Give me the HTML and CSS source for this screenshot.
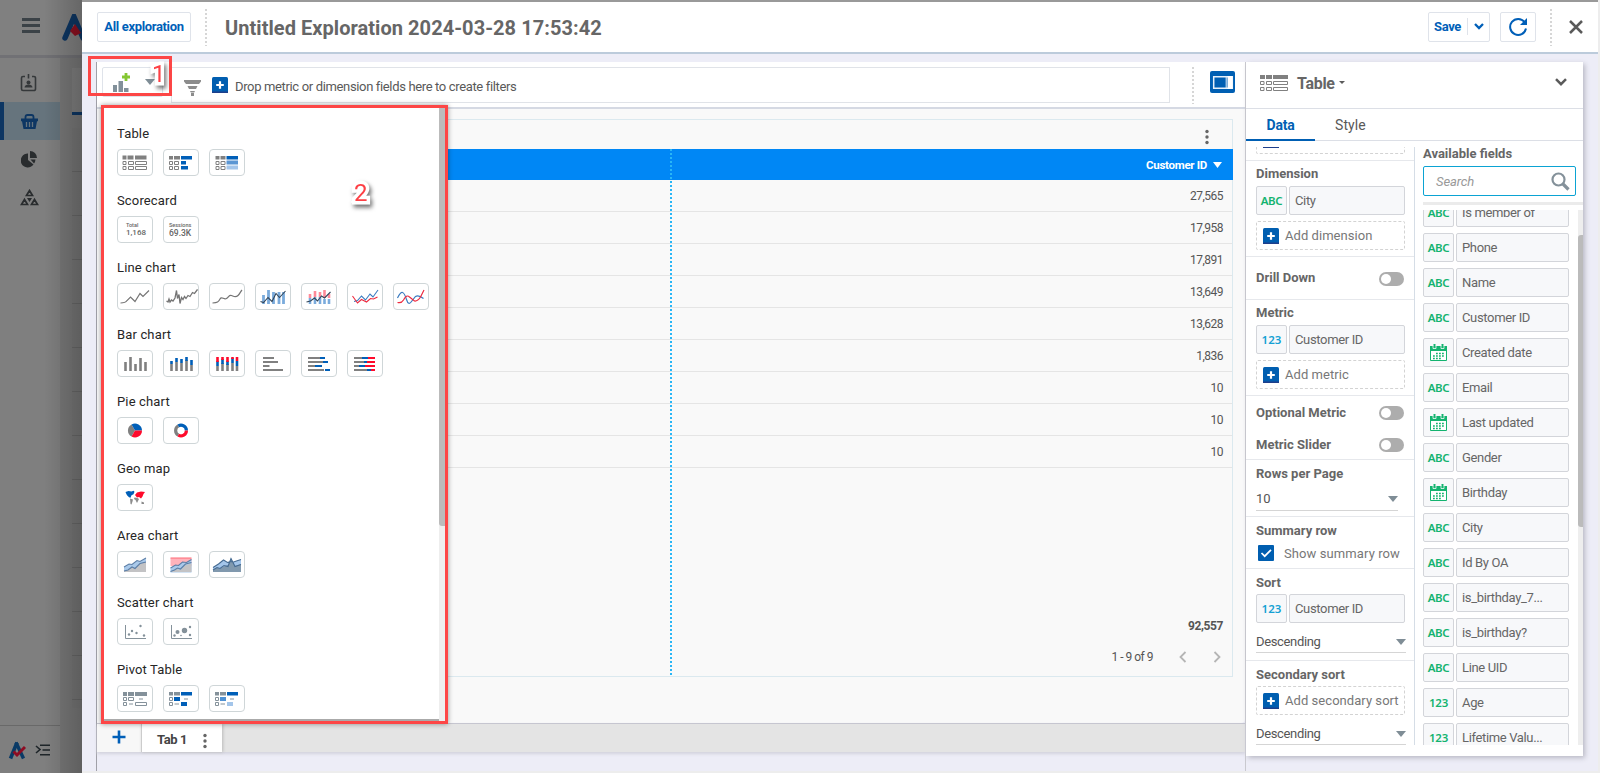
FILE: index.html
```html
<!DOCTYPE html>
<html lang="en">
<head>
<meta charset="utf-8">
<title>Untitled Exploration</title>
<link rel="stylesheet" href="styles.css">
</head>
<body>
<svg class="defs" width="0" height="0">
  <symbol id="plus-box" viewBox="0 0 16 16"><rect width="16" height="16" rx="1.5" fill="#005eb0"/><rect y="14.5" width="16" height="1.5" fill="#1e3f8b"/><path d="M8 4.2v7.6M4.2 8h7.6" stroke="#fff" stroke-width="2.2"/></symbol>
  <symbol id="caret" viewBox="0 0 10 6"><path d="M0 0h10L5 6z" fill="#7f8d96"/></symbol>
  <symbol id="dots" viewBox="0 0 4 16"><circle cx="2" cy="2.5" r="1.7"/><circle cx="2" cy="8" r="1.7"/><circle cx="2" cy="13.5" r="1.7"/></symbol>
  <symbol id="cal" viewBox="0 0 17 17"><path d="M.5 3.500h16v13h-16z" fill="#fff" stroke="#13b36f"/><path d="M0 2h17v5H0z" fill="#13b36f"/><path d="M4.500 0v4M12.500 0v4" stroke="#13b36f" stroke-width="2"/><path d="M3 1.500v3h3v-3M11 1.500v3h3v-3" stroke="#f7f8fa" fill="none" stroke-width=".8"/><path d="M6 9.500h9M3 12h12M3 14.500h8" stroke="#13b36f" stroke-width="1.600" stroke-dasharray="1.800 1.200"/></symbol>
  <symbol id="grid" viewBox="0 0 28 16"><path d="M0 0h5v4H0zM6 0h6v4H6zM13 0h15v4H13z" fill="#808080"/><path d="M.5 6.500h3.500v3H.5zM6.500 6.500h5v3h-5zM13.500 6.500h14v3h-14zM.5 12.500h3.500v3H.5zM6.500 12.500h5v3h-5zM13.500 12.500h14v3h-14z" fill="#fff" stroke="#808080"/></symbol>
  <symbol id="logo" viewBox="0 0 18 20"><path d="M2.500 18.500L9 2.500" stroke="#0a3a66" stroke-width="3.600"/><path d="M8 2.500L15.500 18.500" stroke="#0a3a66" stroke-width="3.400"/><path d="M5.500 11.500l3.500 3.500L17 7" stroke="#8d0c22" stroke-width="3" fill="none"/></symbol>
</svg>

<div class="page">
  <header class="page-head">
    <svg class="burger" width="18" height="16" viewBox="0 0 18 16"><path d="M0 1.500h18M0 7.500h18M0 13.500h18" stroke="#3b4247" stroke-width="3"/></svg>
    <svg class="brand" width="30" height="27" viewBox="0 0 30 27"><path d="M3 24L12 3l9 21" fill="none" stroke="#0d3663" stroke-width="5.500" stroke-linecap="round"/><path d="M8 17l5-7 6 9-6 3z" fill="#8d1020"/></svg>
  </header>
  <div class="page-body">
    <nav class="rail">
      <div class="rail-item"><svg width="18" height="18" viewBox="0 0 18 18" fill="none" stroke="#35383a" stroke-width="1.600"><path d="M5 2.500H3a1.500 1.500 0 0 0-1.500 1.500v11A1.500 1.500 0 0 0 3 16.500h11a1.500 1.500 0 0 0 1.500-1.500V4A1.500 1.500 0 0 0 14 2.500h-2M8.500 0v4.500"/><circle cx="8.500" cy="8.500" r="2" fill="#35383a" stroke="none"/><path d="M4.500 13.500c0-4 8-4 8 0z" fill="#35383a" stroke="none"/></svg></div>
      <div class="rail-item on"><svg width="17" height="15" viewBox="0 0 17 15"><path d="M4.500 6V3q0-2 2-2h4q2 0 2 2v3" fill="none" stroke="#0d3663" stroke-width="1.800"/><path d="M0 4.500h17v2.800H16L14.500 15h-12L1 7.300H0z" fill="#0d3663"/><path d="M5.500 8v5M8.500 8v5M11.500 8v5" stroke="#66747d" stroke-width="1.300"/></svg></div>
      <div class="rail-item"><svg width="17" height="17" viewBox="0 0 17 17" fill="#292c2e"><path d="M7 2.500V9l5.500 4.500A7 7 0 1 1 7 2.500z"/><path d="M9 0a7 7 0 0 1 7 7H9z"/><path d="M9.500 8.500h5q-.2 2.500-1.500 4z"/></svg></div>
      <div class="rail-item"><svg width="19" height="17" viewBox="0 0 19 17" fill="none" stroke="#292c2e" stroke-width="1.700"><path d="M9.500 1.500l3 5H6.500zM4.500 10.500l3 5h-6zM14.500 10.500l3 5h-6z"/><path d="M7 9h5l-2.500 4z" fill="#292c2e" stroke="none"/></svg></div>
      <div class="rail-foot">
        <svg width="18" height="20"><use href="#logo"/></svg>
        <svg width="16" height="12" viewBox="0 0 16 12" fill="none" stroke="#1e2529" stroke-width="1.600"><path d="M1 2l4 3.500L1 9"/><path d="M5 1.200h10M7.500 6H15M5 10.800h10"/></svg>
      </div>
    </nav>
    <div class="under">
      <div class="under-card"></div>
      <div class="under-lines"></div>
    </div>
  </div>
</div>
<div class="shade"></div>

<main class="modal">
  <header class="head">
    <button class="btn all">All exploration</button>
    <i class="dash-sep"></i>
    <h1>Untitled Exploration 2024-03-28 17:53:42</h1>
    <div class="head-right">
      <button class="btn save"><span>Save</span><svg width="10" height="7" viewBox="0 0 10 7"><path d="M1 1l4 4 4-4" fill="none" stroke="#005fb8" stroke-width="2.300"/></svg></button>
      <button class="btn refresh"><svg width="19" height="19" viewBox="0 0 19 19"><path d="M15.500 5A8 8 0 1 0 17 11.500" fill="none" stroke="#005fb8" stroke-width="2"/><path d="M18 1v7h-7z" fill="#005fb8"/></svg></button>
      <i class="dash-sep"></i>
      <svg class="close" width="14" height="14" viewBox="0 0 14 14"><path d="M1 1l12 12M13 1L1 13" stroke="#5a5a5a" stroke-width="2.500"/></svg>
    </div>
  </header>

  <div class="work">
    <section class="board">
      <div class="toolbar">
        <div class="add-chart">
          <svg width="18" height="19" viewBox="0 0 18 19"><path d="M0 12h4v7H0zM5.500 8H10v11H5.500zM11 15h4.500v4H11z" fill="#82909a"/><path d="M13 0v8M9 4h8" stroke="#85c733" stroke-width="2.800"/></svg>
          <svg width="10" height="6"><use href="#caret"/></svg>
        </div>
        <div class="filters">
          <svg width="17" height="16" viewBox="0 0 17 16" fill="#8c8c8c"><path d="M0 0h17v1.500L15 4H2L0 1.500zM3.500 6h10L12 9H5zM6 11h5l-.8 1.500H6.800zM7 13h3v3H7z"/></svg>
          <svg class="pb" width="16" height="16"><use href="#plus-box"/></svg>
          <span>Drop metric or dimension fields here to create filters</span>
        </div>
        <i class="dash-sep"></i>
        <svg class="panel-btn" width="25" height="22" viewBox="0 0 25 22"><rect width="25" height="22" rx="2" fill="#005fb3"/><path d="M3.700 5.700h18.600v11.600H3.700z" fill="#005fb3" stroke="#e6f0fa" stroke-width="1.500"/><path d="M17.500 5h5v13h-5z" fill="#fff"/><path d="M16.200 5v13" stroke="#e6f0fa"/></svg>
      </div>
      <div class="canvas">
        <div class="grid-card">
          <div class="card-top"><svg width="4" height="16" fill="#666"><use href="#dots"/></svg></div>
          <div class="th"><span>Customer ID</span><svg width="9" height="6" viewBox="0 0 9 6"><path d="M0 0h9L4.500 6z" fill="#fff"/></svg></div>
          <div class="td">27,565</div>
          <div class="td">17,958</div>
          <div class="td">17,891</div>
          <div class="td">13,649</div>
          <div class="td">13,628</div>
          <div class="td">1,836</div>
          <div class="td">10</div>
          <div class="td">10</div>
          <div class="td">10</div>
          <div class="total">92,557</div>
          <div class="pager"><span>1 - 9 of 9</span>
            <svg width="8" height="12" viewBox="0 0 8 12"><path d="M6.500 1L1.500 6l5 5" fill="none" stroke="#b5b5b5" stroke-width="1.800"/></svg>
            <svg width="8" height="12" viewBox="0 0 8 12"><path d="M1.500 1l5 5-5 5" fill="none" stroke="#b5b5b5" stroke-width="1.800"/></svg>
          </div>
          <i class="col-line"></i>
        </div>
      </div>
      <div class="tabs-bar">
        <div class="tab-add"><svg width="14" height="14" viewBox="0 0 14 14"><path d="M7 .5v13M.5 7h13" stroke="#005fb8" stroke-width="2.600"/></svg></div>
        <div class="tab-one"><span>Tab 1</span><svg width="4" height="16" fill="#666"><use href="#dots"/></svg></div>
      </div>
    </section>

    <aside class="side">
      <div class="side-head">
        <svg width="28" height="16"><use href="#grid"/></svg>
        <b>Table</b>
        <svg width="6" height="3" viewBox="0 0 6 3"><path d="M0 0h6L3 3z" fill="#5a5a5a"/></svg>
        <svg class="fold" width="12" height="8" viewBox="0 0 12 8"><path d="M1 1.200l5 5 5-5" fill="none" stroke="#5a5a5a" stroke-width="2.500"/></svg>
      </div>
      <div class="side-tabs"><b>Data</b><span>Style</span></div>
      <div class="side-body">
        <div class="setup">
          <div class="sec sec-cut"><div class="drop"><svg width="16" height="16"><use href="#plus-box"/></svg></div></div>
          <div class="sec sec-field">
            <h4>Dimension</h4>
            <div class="field"><i class="type green">ABC</i><span>City</span></div>
            <div class="drop"><svg width="16" height="16"><use href="#plus-box"/></svg>Add dimension</div>
          </div>
          <div class="sec sec-drill"><h4>Drill Down</h4><i class="switch"></i></div>
          <div class="sec sec-field">
            <h4>Metric</h4>
            <div class="field"><i class="type blue">123</i><span>Customer ID</span></div>
            <div class="drop"><svg width="16" height="16"><use href="#plus-box"/></svg>Add metric</div>
          </div>
          <div class="sec sec-toggles">
            <div><h4>Optional Metric</h4><i class="switch"></i></div>
            <div><h4>Metric Slider</h4><i class="switch"></i></div>
          </div>
          <div class="sec sec-rows">
            <h4>Rows per Page</h4>
            <div class="select narrow">10<svg width="10" height="6"><use href="#caret"/></svg></div>
          </div>
          <div class="sec sec-sum">
            <h4>Summary row</h4>
            <div class="check"><svg width="16" height="16" viewBox="0 0 16 16"><rect width="16" height="16" rx="1" fill="#005eb0"/><path d="M3.500 8l3.200 3.200L13 4.800" fill="none" stroke="#fff" stroke-width="1.700"/></svg>Show summary row</div>
          </div>
          <div class="sec sec-sort">
            <h4>Sort</h4>
            <div class="field"><i class="type blue">123</i><span>Customer ID</span></div>
            <div class="select">Descending<svg width="10" height="6"><use href="#caret"/></svg></div>
          </div>
          <div class="sec sec-second">
            <h4>Secondary sort</h4>
            <div class="drop"><svg width="16" height="16"><use href="#plus-box"/></svg>Add secondary sort</div>
            <div class="select">Descending<svg width="10" height="6"><use href="#caret"/></svg></div>
          </div>
        </div>
        <div class="avail">
          <h4>Available fields</h4>
          <div class="search"><em>Search</em><svg width="19" height="19" viewBox="0 0 19 19"><circle cx="7.500" cy="7.500" r="6" fill="none" stroke="#84919a" stroke-width="2.200"/><path d="M11.500 11.500l6 6" stroke="#84919a" stroke-width="3.200"/></svg></div>
          <div class="bar"></div>
          <div class="list-wrap">
            <div class="list">
              <div class="field"><i class="type green">ABC</i><span>Is member of</span></div>
              <div class="field"><i class="type green">ABC</i><span>Phone</span></div>
              <div class="field"><i class="type green">ABC</i><span>Name</span></div>
              <div class="field"><i class="type green">ABC</i><span>Customer ID</span></div>
              <div class="field"><i class="type"><svg width="17" height="17"><use href="#cal"/></svg></i><span>Created date</span></div>
              <div class="field"><i class="type green">ABC</i><span>Email</span></div>
              <div class="field"><i class="type"><svg width="17" height="17"><use href="#cal"/></svg></i><span>Last updated</span></div>
              <div class="field"><i class="type green">ABC</i><span>Gender</span></div>
              <div class="field"><i class="type"><svg width="17" height="17"><use href="#cal"/></svg></i><span>Birthday</span></div>
              <div class="field"><i class="type green">ABC</i><span>City</span></div>
              <div class="field"><i class="type green">ABC</i><span>Id By OA</span></div>
              <div class="field"><i class="type green">ABC</i><span>is_birthday_7...</span></div>
              <div class="field"><i class="type green">ABC</i><span>is_birthday?</span></div>
              <div class="field"><i class="type green">ABC</i><span>Line UID</span></div>
              <div class="field"><i class="type green">123</i><span>Age</span></div>
              <div class="field"><i class="type green">123</i><span>Lifetime Valu...</span></div>
            </div>
            <div class="track"><div class="thumb"></div></div>
          </div>
        </div>
      </div>
    </aside>
  </div>
</main>

<div class="mark mark-1"></div>
<div class="num num-1">1</div>

<div class="menu">
  <div class="menu-list">
    <section><h3>Table</h3><div class="opts">
      <i><svg viewBox="0 0 36 27"><path d="M5.500 6.500h4v4h-4zM10.500 6.500h6v4h-6zM18 6.500h11.500v4H18z" fill="#808080"/><path d="M6 12.500h3v3H6zM11.500 12.500h5v3h-5zM18.500 12.500h11v3h-11zM6 17.500h3v3H6zM11.500 17.500h5v3h-5zM18.500 17.500h11v3h-11z" fill="none" stroke="#808080"/></svg></i>
      <i><svg viewBox="0 0 36 27"><path d="M6 7h4v3.500H6zM11 7h6v3.500h-6z" fill="#808080"/><path d="M6.500 12.500h3v3h-3zM11.500 12.500h4v3h-4zM6.500 17.500h3v3h-3zM11.500 17.500h4v3h-4z" fill="none" stroke="#808080"/><path d="M18 7h11v3.500H18zM18 12h5v3.500h-5zM18 17h7v3.500h-7z" fill="#005fb8"/></svg></i>
      <i><svg viewBox="0 0 36 27"><path d="M6.500 7h4v3.500h-4zM11.500 7h5v3.500h-5z" fill="#808080"/><path d="M7 12.500h3v3H7zM12 12.500h4v3h-4zM7 17.500h3v3H7zM12 17.500h4v3h-4z" fill="none" stroke="#808080"/><path d="M17.500 7H29v3.500H17.500z" fill="#005fb8"/><path d="M17.500 11.500H29v4H17.500z" fill="#5b96d3"/><path d="M17.500 16.500H29v4H17.500z" fill="#a3c5ea"/></svg></i>
    </div></section>
    <section><h3>Scorecard</h3><div class="opts">
      <i class="score"><small>Total</small><span>1,168</span></i>
      <i class="score wide"><small>Sessions</small><span>69.3K</span></i>
    </div></section>
    <section><h3>Line chart</h3><div class="opts">
      <i><svg viewBox="0 0 36 27" fill="none" stroke="#757575" stroke-width="1.200"><path d="M3.500 20q5 0 6.500-2.500l3.500-3.500 4.500 4.500 5-8 3 3 6-6"/></svg></i>
      <i><svg viewBox="0 0 36 27" fill="none" stroke="#757575" stroke-width="1.300"><path d="M3.500 18l1.500 1 1-3 1 3 1.500-2 1.500 1 2-3 1.500-7.500 1 8 1.500-4 1 9 1.500-6 1.500 2 1.500-3 1.500 2 2-3 2 1 2.500-4 2 1 3-4"/></svg></i>
      <i><svg viewBox="0 0 36 27" fill="none" stroke="#757575" stroke-width="1.200"><path d="M3.500 20c5-.5 6-1 7.500-4s4 1 6.500-.5 2.500-4 5-3 4 2.500 6.500 0c2-2 2.500-4 4-5.500"/></svg></i>
      <i><svg viewBox="0 0 36 27" fill="none"><path d="M8.500 21v-9M13.500 21V7M18.500 21V9M24 21V9M28.500 21V9" stroke="#7aabdc" stroke-width="2.800"/><path d="M5.500 18.500l3 1 4.500-5 4 4 4-8 3.500 4 6-6.500" stroke="#33475b" stroke-width="1.100"/></svg></i>
      <i><svg viewBox="0 0 36 27" fill="none"><path d="M9 21v-6M14 21v-7M19 21v-7M23.500 21v-5M28 21v-5" stroke="#7aabdc" stroke-width="2.600"/><path d="M9 15v-4M14 14V8M19 14V9M23.500 15V7M28 15v-4" stroke="#ff8a98" stroke-width="2.600"/><path d="M5.500 19l4-1 4-3 3 3 4-5 3 2 6-6" stroke="#33475b" stroke-width="1.100"/></svg></i>
      <i><svg viewBox="0 0 36 27" fill="none" stroke-width="1.100"><path d="M7 18.500l3.500-1 4-4.500 4 4 4.500-6 3 3L31 7" stroke="#3b7cc0"/><path d="M5.500 13l5 7 4-3.500 5 2.500 4-3.500 3 .5 4-2" stroke="#ee2a3f"/></svg></i>
      <i><svg viewBox="0 0 36 27" fill="none" stroke-width="1.200"><path d="M4.500 15q3-6 5-5.500t4 7 5 2l4-5q3-2 8 2" stroke="#3b7cc0"/><path d="M4.500 19.500q4 1 6-2.500 3-6 6-3l5 4q3 .5 6-4l3.500-7" stroke="#ee2a3f"/></svg></i>
    </div></section>
    <section><h3>Bar chart</h3><div class="opts">
      <i><svg viewBox="0 0 36 27" fill="none" stroke="#808080" stroke-width="2.600"><path d="M8.500 21v-9M13.500 21V7M18.500 21v-7M23.500 21V8M28.500 21v-9"/></svg></i>
      <i><svg viewBox="0 0 36 27" fill="none" stroke="#808080" stroke-width="2.600"><path d="M8.500 21v-7M13.500 21v-9M18.500 21v-8M23.500 21V10M28.500 21v-6"/><path d="M8.500 14v-3M13.500 12V8M18.500 13V9M23.500 11V7M28.500 15v-5" stroke="#005fb8"/></svg></i>
      <i><svg viewBox="0 0 36 27" fill="none" stroke="#808080" stroke-width="2.600"><path d="M8.500 21v-5M13.500 21v-8M18.500 21v-7M23.500 21v-8M28 21v-5"/><path d="M8.500 16v-5M13.500 14V9M18.500 15v-4M23.500 13V8M28 16v-5" stroke="#005fb8"/><path d="M8.500 12V7M13.500 10V7M18.500 12V7M23.500 9V7M28 11V7" stroke="#ff0a2b"/></svg></i>
      <i><svg viewBox="0 0 36 27" fill="none" stroke="#808080" stroke-width="2"><path d="M8 8h11M8 12h15M8 16h6.500M8 20h20"/></svg></i>
      <i><svg viewBox="0 0 36 27" fill="none" stroke="#808080" stroke-width="2"><path d="M7 8h12M7 12h15M7 16h7M7 20h16"/><path d="M19 8h5M22 12h5M14 16h7M24 20h5" stroke="#005fb8"/></svg></i>
      <i><svg viewBox="0 0 36 27" fill="none" stroke="#808080" stroke-width="2"><path d="M7 8h8M7 12h10M7 16h5M7 20h15"/><path d="M15 8h6M17 12h4M12 16h6M20 20h5" stroke="#005fb8"/><path d="M21 8h7M20 12h8M18 16h10M24 20h4" stroke="#ff0a2b"/></svg></i>
    </div></section>
    <section><h3>Pie chart</h3><div class="opts">
      <i><svg viewBox="0 0 36 27"><path d="M18 13.500L14.500 7.400A7 7 0 0 0 14.500 19.600z" fill="#808080"/><path d="M18 13.500L14.500 7.400A7 7 0 0 1 25 13.500z" fill="#005fb8"/><path d="M18 13.500H25A7 7 0 0 1 14.500 19.600z" fill="#ff0a2b"/></svg></i>
      <i><svg viewBox="0 0 36 27" fill="none" stroke-width="3.200"><path d="M15.300 8.900A5.400 5.400 0 0 0 15.300 18.200" stroke="#808080"/><path d="M15.300 8.900A5.400 5.400 0 0 1 23.400 13.500" stroke="#005fb8"/><path d="M23.400 13.500A5.400 5.400 0 0 1 15.300 18.200" stroke="#ff0a2b"/></svg></i>
    </div></section>
    <section><h3>Geo map</h3><div class="opts">
      <i><svg viewBox="0 0 36 27"><path d="M8.500 8l3-1 3 .5 2-.7 1 1-1 2.500-2 1-1 2.500-1.500-.5-2-2-1-2z" fill="#005fb8"/><path d="M13 14.500l3 1-.5 2-1 3-1-.5zM17.500 13.500l3 .5 1.500 1-1 2-1 2-1.500-3-1.500-1zM24.500 17.500l2.500 1v1.500h-2.500z" fill="#8c8c8c"/><path d="M18 11l2-2.500 4-1 4 .5-1.500 2-1 2.500-1.500 2-2-1.500-2 .5z" fill="#ff0a2b"/></svg></i>
    </div></section>
    <section><h3>Area chart</h3><div class="opts">
      <i><svg viewBox="0 0 36 27"><path d="M7 16l5-3 3 .5 5-4 3 1L29 7v14H7z" fill="#a9c9ea"/><path d="M7 20l4-1 4-3 3 1.500 5-5 6-1.500v10H7z" fill="#c3c3c5"/><path d="M7 16l5-3 3 .5 5-4 3 1L29 7M7 20l4-1 4-3 3 1.500 5-5 6-1.500" fill="none" stroke="#5c7ea6" stroke-width="1.100"/></svg></i>
      <i><svg viewBox="0 0 36 27"><path d="M7.500 7h21v8h-21z" fill="#ffb3bb"/><path d="M7.500 7h21" stroke="#ff6975"/><path d="M7.500 17l5-3 3 .5 4-3.500 4 .5 5-3v13h-21z" fill="#a9c9ea"/><path d="M7.500 21l4-2 3-1 3 1 5-5 6-1.500v8.500z" fill="#c3c3c5"/><path d="M7.500 17l5-3 3 .5 4-3.500 4 .5 5-3M7.500 20.500l4-1.500 3-2 3 1 5-5 6-1.500" fill="none" stroke="#5c7ea6" stroke-width="1.100"/></svg></i>
      <i><svg viewBox="0 0 36 27"><path d="M4 16.500l5.500-3.500 5-4 4 2.500 3-1 3 .5L32 8.500V21H4z" fill="#a3c5ea"/><path d="M4 21v-2l4-2.500 3 1 5-2.500 3-1 3-7 4 8 6-2v8z" fill="#8199ae"/><path d="M4 16.500l5.500-3.500 5-4 4 2.500 3-1 3 .5L32 8.500M4 19l4-2.500 3 1 4-3 4 1 3-8 4 8 6-2" fill="none" stroke="#466b92" stroke-width="1.100"/></svg></i>
    </div></section>
    <section><h3>Scatter chart</h3><div class="opts">
      <i><svg viewBox="0 0 36 27"><path d="M8.500 7v13.500H29" fill="none" stroke="#84919a"/><g fill="#84919a"><circle cx="12" cy="16.500" r="1.200"/><circle cx="15" cy="13" r="1.200"/><circle cx="19.500" cy="15" r="1.200"/><circle cx="23.500" cy="8" r="1.200"/><circle cx="27" cy="17.500" r="1.200"/></g></svg></i>
      <i><svg viewBox="0 0 36 27"><path d="M8.500 7v13.500H29" fill="none" stroke="#84919a"/><g fill="#84919a"><circle cx="11.500" cy="17.500" r="1.200"/><circle cx="14.500" cy="14" r="2"/><circle cx="21.500" cy="12.500" r="2.700"/><circle cx="18" cy="17.500" r=".8"/><circle cx="27" cy="9" r="1.200"/><circle cx="27" cy="17" r="1.200"/></g></svg></i>
    </div></section>
    <section><h3>Pivot Table</h3><div class="opts">
      <i><svg viewBox="0 0 36 27"><path d="M6 7h4v4H6zM11 7h6v4h-6zM18 7h12v4H18z" fill="#84919a"/><path d="M6.500 12.500h3v3h-3zM11.500 12.500h5v3h-5zM6.500 17.500h3v3h-3zM18.500 17.500h11v3h-11zM22 14h4M12 19h4" fill="none" stroke="#84919a"/></svg></i>
      <i><svg viewBox="0 0 36 27"><path d="M6 7h4v3.500H6zM11 7h6v3.500h-6z" fill="#84919a"/><path d="M6.500 12.500h3v3h-3zM6.500 17.500h3v3h-3zM21 14h4M11.500 19h4.500" fill="none" stroke="#84919a"/><path d="M18 7h11v3.500H18zM11 12h6v4h-6zM18 17h6v4h-6z" fill="#005fb8"/></svg></i>
      <i><svg viewBox="0 0 36 27"><path d="M6 7h4v3.500H6zM11 7h6v3.500h-6z" fill="#84919a"/><path d="M6.500 12.500h3v3h-3zM6.500 17.500h3v3h-3zM21 14h4M11.500 19h4.500" fill="none" stroke="#84919a"/><path d="M18 7h11v3.500H18z" fill="#005fb8"/><path d="M11 12h6v4h-6z" fill="#4e91d4"/><path d="M18 17h6v4h-6z" fill="#a3c5ea"/></svg></i>
    </div></section>
  </div>
  <div class="menu-track"><div class="menu-thumb"></div></div>
</div>
<div class="num num-2">2</div>
</body>
</html>
```
FILE: styles.css
```css
* { box-sizing: border-box; }
body { margin: 0; width: 1600px; height: 773px; overflow: hidden; position: relative; background: #ededed; font-family: Roboto, "Liberation Sans", sans-serif; font-size: 13px; color: #595959; }
h1, h3, h4 { margin: 0; }
svg { display: block; flex: none; }
i { font-style: normal; }
.defs { position: absolute; }

/* dimmed page under the dialog */
.page { width: 82px; height: 773px; overflow: hidden; background: #777; display: flex; flex-direction: column; }
.page-head { height: 58px; flex: none; background: #808080; border-bottom: 3px solid #717175; display: flex; padding: 14px 0 0 22px; }
.burger { margin-top: 4px; }
.brand { margin-left: 22px; }
.page-body { flex: 1; display: flex; }
.rail { width: 60px; flex: none; background: #7f7f7f; display: flex; flex-direction: column; padding-top: 6px; }
.rail-item { height: 38px; display: flex; align-items: center; justify-content: center; padding-right: 2px; }
.rail-item.on { background: #66747d; border-left: 4px solid #0d3663; padding-right: 6px; }
.rail-foot { margin-top: auto; height: 48px; border-top: 1px solid #696969; display: flex; align-items: center; gap: 9px; padding-left: 8px; }
.under { width: 100px; flex: none; padding: 10px 0 0 12px; }
.under-card { height: 47px; background: #7e7e7e; border-bottom: 3px solid #0d3663; }
.under-lines { height: 580px; margin-top: 13px; background: repeating-linear-gradient(#757575 0 43px, #676767 43px 44px); }
.shade { position: absolute; left: 44px; top: 0; width: 38px; height: 773px; background: linear-gradient(90deg, rgba(0,0,0,0), rgba(0,0,0,.2)); }

/* dialog */
.modal { position: absolute; left: 82px; top: 0; width: 1516px; height: 771px; border-top: 2px solid #999; background: #ededf7; display: flex; flex-direction: column; }
.head { height: 52px; flex: none; background: #fff; border-bottom: 2px solid #bccbdb; display: flex; align-items: flex-start; padding: 10px 15px 0; }
.btn { height: 30px; background: #fff; border: 1px solid #dfe3ea; border-radius: 2px; color: #005fb8; font: 700 13px Roboto, sans-serif; letter-spacing: -.35px; padding: 0 0 1px; display: flex; align-items: center; justify-content: center; }
.all { width: 94px; margin-right: 14px; }
.dash-sep { width: 2px; height: 37px; flex: none; background: repeating-linear-gradient(#d6d6d6 0 2px, #fff 2px 4px); }
.head .dash-sep { margin-top: -3px; }
h1 { font-size: 20px; font-weight: 700; color: #666; line-height: 30px; margin-left: 18px; padding-top: 1px; white-space: nowrap; letter-spacing: .05px; }
.head-right { margin-left: auto; display: flex; }
.save { width: 62px; margin-right: 10px; }
.save span { padding-right: 6px; border-right: 1px solid #dfe3ea; line-height: 17px; margin-right: 6px; }
.refresh { width: 36px; margin-right: 14px; }
.close { margin: 8px 0 0 17px; }

.work { flex: 1; display: flex; padding: 8px 0 0 14px; }
.board { width: 1150px; display: flex; flex-direction: column; border-left: 1px solid #a0a0a8; border-right: 1px solid #c9c9cf; }
.toolbar { height: 47px; flex: none; background: #fff; border-bottom: 2px solid #d5d9e3; display: flex; padding-top: 5px; }
.add-chart { width: 61px; height: 30px; margin: 0 0 0 5px; border: 1px solid #dfe3ea; border-radius: 2px; display: flex; padding: 5px 0 0 10px; gap: 14px; }
.add-chart svg + svg { margin-top: 6px; }
.filters { width: 999px; height: 36px; margin-left: 8px; border: 1px solid #e0e3e8; display: flex; align-items: flex-start; padding: 12px 0 0 12px; }
.filters .pb { margin: -3px 7px 0 11px; }
.filters span { line-height: 16px; margin-top: -1px; letter-spacing: -.35px; }
.toolbar .dash-sep { margin: 0 17px 0 22px; }
.panel-btn { margin: 4px 0 0 -1px; }
.canvas { height: 614px; background: #f9f9f9; padding: 10px 12px 0 8px; border-radius: 0 0 4px 0; }
.grid-card { position: relative; height: 558px; border: 1px solid #dbe9ef; display: flex; flex-direction: column; font-size: 12px; color: #555; letter-spacing: -.5px; }
.card-top { height: 29px; display: flex; justify-content: flex-end; padding: 9px 23px 0 0; }
.th { height: 31px; margin-right: -1px; background: #0087f5; color: #fff; font-weight: 700; display: flex; align-items: center; justify-content: flex-end; gap: 6px; padding: 0 11px 0 0; letter-spacing: -.3px; font-size: 11.500px; }
.td { height: 32px; border-bottom: 1px solid #e5e5e5; text-align: right; padding-right: 9px; line-height: 33px; }
.total { margin-top: 148px; line-height: 21px; text-align: right; padding-right: 9px; font-weight: 700; letter-spacing: -.4px; }
.pager { margin-top: 10px; height: 20px; display: flex; align-items: center; justify-content: flex-end; padding-right: 11px; }
.pager svg { margin-left: 26px; }
.col-line { position: absolute; right: 560px; top: 29px; width: 2px; bottom: -1px; background: repeating-linear-gradient(#29b6f6 0 2px, transparent 2px 4px); }
.tabs-bar { height: 29px; flex: none; background: #e4e4e4; border-top: 1px solid #c6c6d0; display: flex; box-shadow: 0 2px 3px #d3d3dd; }
.tab-add { width: 44px; background: #f7f7f7; display: flex; justify-content: center; padding-top: 6px; }
.tab-one { width: 81px; background: #fff; border-left: 1px solid #ccc; box-shadow: 1px 0 3px #bbb; display: flex; padding: 8px 0 0 15px; font-weight: 700; letter-spacing: -.4px; color: #444; }
.tab-one svg { margin: 1px 0 0 16px; }

/* right panel */
.side { width: 337px; height: 694px; background: #fff; box-shadow: 2px 2px 5px #b9b9c4; display: flex; flex-direction: column; }
.side-head { height: 47px; flex: none; border-bottom: 1px solid #dcdfe6; display: flex; align-items: center; padding: 0 16px 5px 14px; }
.side-head b { font-size: 16px; font-weight: 700; margin: 1px 4px 0 9px; color: #666; letter-spacing: -.3px; }
.fold { margin-left: auto; margin-top: -2px; }
.side-tabs { height: 32px; flex: none; border-bottom: 1px solid #dcdfe6; display: flex; font-size: 14px; line-height: 32px; }
.side-tabs b { width: 69px; height: 32px; border-bottom: 2px solid #005fb3; color: #005fb3; font-weight: 700; text-align: center; letter-spacing: -.2px; }
.side-tabs span { margin-left: 20px; letter-spacing: .1px; }
.side-body { margin-top: 6px; height: 598px; overflow: hidden; display: flex; }
.setup { width: 169px; flex: none; height: 598px; overflow: hidden; border-right: 1px solid #d5dde6; }
.sec { border-bottom: 1px solid #e6e8ec; padding: 0 9px 0 10px; }
h4 { font-size: 13px; font-weight: 700; color: #666; line-height: 16px; letter-spacing: 0; }
.field { display: flex; gap: 2px; height: 29px; }
.type { width: 31px; flex: none; border: 1px solid #d3d5da; border-radius: 2px; background: #f7f8fa; font: 600 11.500px/26px "Noto Sans", sans-serif; letter-spacing: -.3px; text-align: center; display: flex; align-items: center; justify-content: center; }
.green { color: #13b36f; }
.blue { color: #14a0d4; letter-spacing: .1px; }
.field span { flex: 1; border: 1px solid #d3d5da; border-radius: 2px; background: #f7f8fa; line-height: 28px; padding-left: 5px; color: #666; letter-spacing: -.35px; }
.drop { height: 29px; border: 1px dashed #d3d3d3; border-radius: 2px; display: flex; align-items: center; gap: 6px; padding-left: 6px; color: #777; letter-spacing: .05px; white-space: nowrap; }
.sec-cut { height: 14px; overflow: hidden; }
.sec-cut .drop { margin-top: -22px; }
.sec-field { height: 96px; padding-top: 5px; }
.sec-field .field { margin: 4px 0 6px; }
.sec-drill { height: 43px; display: flex; align-items: center; justify-content: space-between; padding-right: 10px; }
.sec-drill .switch { margin-top: 2px; }
.switch { width: 25px; height: 14px; border-radius: 7px; background: #adadad; padding: 2px; }
.switch::before { content: ""; display: block; width: 10px; height: 10px; border-radius: 5px; background: #fff; }
.sec-toggles { height: 64px; padding-right: 10px; }
.sec-toggles div { height: 32px; display: flex; align-items: center; justify-content: space-between; padding-top: 2px; }
.sec-rows { height: 57px; padding-top: 6px; }
.select { height: 22px; border-bottom: 1px solid #d5d5d5; display: flex; justify-content: space-between; align-items: center; color: #555; margin-right: -1px; letter-spacing: -.35px; }
.narrow { width: 142px; margin-top: 5px; height: 24px; letter-spacing: 0; }
.sec-sum { height: 52px; padding-top: 6px; }
.check { display: flex; gap: 10px; height: 16px; align-items: center; margin: 6px 0 0 2px; color: #777; letter-spacing: .1px; white-space: nowrap; }
.sec-sort { height: 92px; padding-top: 6px; }
.sec-sort .field { margin: 3px 0 8px; }
.sec-second { padding-top: 6px; }
.sec-second .drop { margin: 3px 0 8px; }
.avail { flex: 1; padding-left: 8px; }
.avail h4 { line-height: 14px; }
.search { width: 153px; height: 30px; margin-top: 5px; border: 1px solid #0ba3d3; border-radius: 2px; display: flex; align-items: center; justify-content: space-between; padding: 0 5px 0 12px; color: #999; letter-spacing: -.1px; }
.bar { height: 3px; margin: 6px 0 5px; background: #ebebeb; }
.list-wrap { height: 535px; overflow: hidden; display: flex; justify-content: space-between; }
.list { width: 146px; margin-top: -12px; display: flex; flex-direction: column; gap: 6px; }
.list .field { flex: none; }
.track { width: 5px; background: #eee; }
.thumb { height: 292px; margin-top: 25px; background: #bbb; border-radius: 3px 0 0 3px; }

/* chart picker */
.menu { position: absolute; left: 101px; top: 105px; width: 347px; height: 619px; border: 3px solid #fd4646; background: #fff; box-shadow: 0 0 5px rgba(0,0,0,.4), inset 0 -2px 0 #aaa; display: flex; }
.menu-list { flex: 1; padding: 18px 0 0 13px; height: 611px; overflow: hidden; }
.menu section { height: 67px; }
.menu h3 { font-size: 13px; font-weight: 400; line-height: 16px; color: #262626; margin-bottom: 7px; letter-spacing: .15px; }
.opts { display: flex; gap: 10px; }
.opts i { width: 36px; height: 27px; flex: none; border: 1px solid #cfd6d8; border-radius: 4px; overflow: hidden; }
.opts svg { width: 36px; height: 27px; margin: -1px; }
.opts .score { padding: 6px 0 0 8px; color: #666; line-height: 1; }
.score small { display: block; font-size: 5.500px; line-height: 5px; font-weight: 500; }
.score span { display: block; font-size: 8px; line-height: 10px; font-weight: 500; }
.opts .wide { padding-left: 5px; }
.wide span { font-size: 8.500px; }
.menu-track { width: 6px; background: #eee; }
.menu-thumb { height: 418px; background: #bbb; border-radius: 0 0 0 3px; }

/* numbered callouts */
.mark { position: absolute; left: 88px; top: 56px; width: 84px; height: 40px; border: 3px solid #fd4646; }
.num { position: absolute; color: #fd3f44; font-size: 24px; line-height: 24px; -webkit-text-stroke: 7px #fff; paint-order: stroke fill; filter: drop-shadow(2px 3px 2px rgba(0,0,0,.55)); }
.num-1 { left: 152px; top: 62px; }
.num-2 { left: 354px; top: 181px; }
```
